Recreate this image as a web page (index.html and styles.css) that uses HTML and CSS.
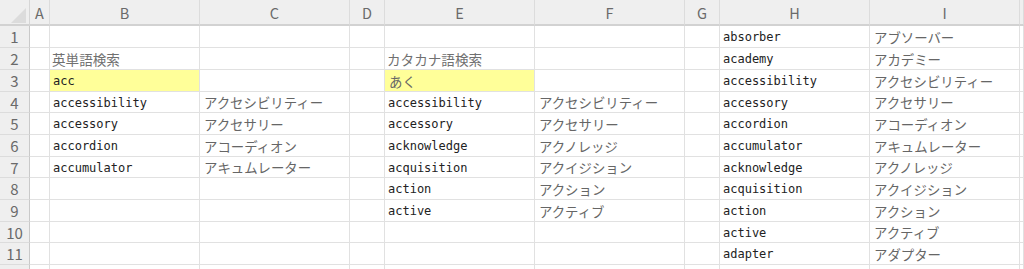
FILE: index.html
```html
<!DOCTYPE html>
<html lang="ja">
<head>
<meta charset="utf-8">
<title>Sheet</title>
<link rel="stylesheet" href="styles.css">
</head>
<body>
<div class="sheet">
  <div class="corner"><span class="tri"></span></div>
  <div class="ch">A</div><div class="ch">B</div><div class="ch">C</div><div class="ch">D</div><div class="ch">E</div><div class="ch">F</div><div class="ch">G</div><div class="ch">H</div><div class="ch">I</div><div class="ch"></div>

  <div class="rh">1</div><div class="c"></div><div class="c"></div><div class="c"></div><div class="c"></div><div class="c"></div><div class="c"></div><div class="c"></div><div class="c en">absorber</div><div class="c ja">アブソーバー</div><div class="c"></div>

  <div class="rh">2</div><div class="c"></div><div class="c hd">英単語検索</div><div class="c"></div><div class="c"></div><div class="c hd">カタカナ語検索</div><div class="c"></div><div class="c"></div><div class="c en">academy</div><div class="c ja">アカデミー</div><div class="c"></div>

  <div class="rh">3</div><div class="c"></div><div class="c en yl">acc</div><div class="c"></div><div class="c"></div><div class="c ja yl">あく</div><div class="c"></div><div class="c"></div><div class="c en">accessibility</div><div class="c ja">アクセシビリティー</div><div class="c"></div>

  <div class="rh">4</div><div class="c"></div><div class="c en">accessibility</div><div class="c ja">アクセシビリティー</div><div class="c"></div><div class="c en">accessibility</div><div class="c ja">アクセシビリティー</div><div class="c"></div><div class="c en">accessory</div><div class="c ja">アクセサリー</div><div class="c"></div>

  <div class="rh">5</div><div class="c"></div><div class="c en">accessory</div><div class="c ja">アクセサリー</div><div class="c"></div><div class="c en">accessory</div><div class="c ja">アクセサリー</div><div class="c"></div><div class="c en">accordion</div><div class="c ja">アコーディオン</div><div class="c"></div>

  <div class="rh">6</div><div class="c"></div><div class="c en">accordion</div><div class="c ja">アコーディオン</div><div class="c"></div><div class="c en">acknowledge</div><div class="c ja">アクノレッジ</div><div class="c"></div><div class="c en">accumulator</div><div class="c ja">アキュムレーター</div><div class="c"></div>

  <div class="rh">7</div><div class="c"></div><div class="c en">accumulator</div><div class="c ja">アキュムレーター</div><div class="c"></div><div class="c en">acquisition</div><div class="c ja">アクイジション</div><div class="c"></div><div class="c en">acknowledge</div><div class="c ja">アクノレッジ</div><div class="c"></div>

  <div class="rh">8</div><div class="c"></div><div class="c"></div><div class="c"></div><div class="c"></div><div class="c en">action</div><div class="c ja">アクション</div><div class="c"></div><div class="c en">acquisition</div><div class="c ja">アクイジション</div><div class="c"></div>

  <div class="rh">9</div><div class="c"></div><div class="c"></div><div class="c"></div><div class="c"></div><div class="c en">active</div><div class="c ja">アクティブ</div><div class="c"></div><div class="c en">action</div><div class="c ja">アクション</div><div class="c"></div>

  <div class="rh">10</div><div class="c"></div><div class="c"></div><div class="c"></div><div class="c"></div><div class="c"></div><div class="c"></div><div class="c"></div><div class="c en">active</div><div class="c ja">アクティブ</div><div class="c"></div>

  <div class="rh">11</div><div class="c"></div><div class="c"></div><div class="c"></div><div class="c"></div><div class="c"></div><div class="c"></div><div class="c"></div><div class="c en">adapter</div><div class="c ja">アダプター</div><div class="c"></div>

  <div class="rh"></div><div class="c"></div><div class="c"></div><div class="c"></div><div class="c"></div><div class="c"></div><div class="c"></div><div class="c"></div><div class="c"></div><div class="c"></div><div class="c"></div>
</div>
</body>
</html>
```

FILE: styles.css
```css
html, body {
  margin: 0;
  padding: 0;
  background: #ffffff;
  overflow: hidden;
}

.sheet {
  display: grid;
  grid-template-columns: 30px 20px 150px 150px 35px 150px 150px 35px 150px 150px 1fr;
  grid-template-rows: 26px 22px 22px 22px 21px 22px 22px 21px 22px 22px 21px 22px 22px;
  width: 1024px;
  height: 269px;
  overflow: hidden;
  font-family: "Noto Sans CJK JP", "Noto Sans", sans-serif;
}

.sheet > div {
  box-sizing: border-box;
  min-width: 0;
  overflow: hidden;
  white-space: nowrap;
}

.corner {
  position: relative;
  background: #efefef;
  border-right: 1px solid #d6d6d6;
  border-bottom: 2px solid #d2d2d2;
}

.tri {
  position: absolute;
  right: 3px;
  bottom: 1px;
  width: 0;
  height: 0;
  border-left: 15px solid transparent;
  border-bottom: 15px solid #dcdcdc;
}

.ch {
  background: #efefef;
  border-right: 1px solid #dcdcdc;
  border-bottom: 2px solid #d2d2d2;
  color: #6a6a6a;
  font-size: 14.5px;
  display: flex;
  align-items: center;
  justify-content: center;
  padding-top: 1px;
}

.rh {
  background: #efefef;
  border-right: 1px solid #c9c9c9;
  border-bottom: 1px solid #dcdcdc;
  color: #6a6a6a;
  font-size: 15px;
  display: flex;
  align-items: center;
  justify-content: center;
}

.c {
  border-right: 1px solid #e1e1e1;
  border-bottom: 1px solid #e1e1e1;
  display: flex;
  align-items: center;
  padding-left: 3px;
}

.en {
  font-family: "DejaVu Sans Mono", "Liberation Mono", monospace;
  font-size: 12px;
  color: #222222;
  padding-top: 1px;
}

.ja {
  font-family: "Noto Sans CJK JP", "Noto Sans", sans-serif;
  font-size: 13.4px;
  color: #666666;
  padding-left: 4px;
}

.hd {
  font-family: "Noto Sans CJK JP", "Noto Sans", sans-serif;
  font-size: 13.6px;
  color: #707070;
  padding-left: 2px;
}

.yl {
  background: #ffff99;
}
```
